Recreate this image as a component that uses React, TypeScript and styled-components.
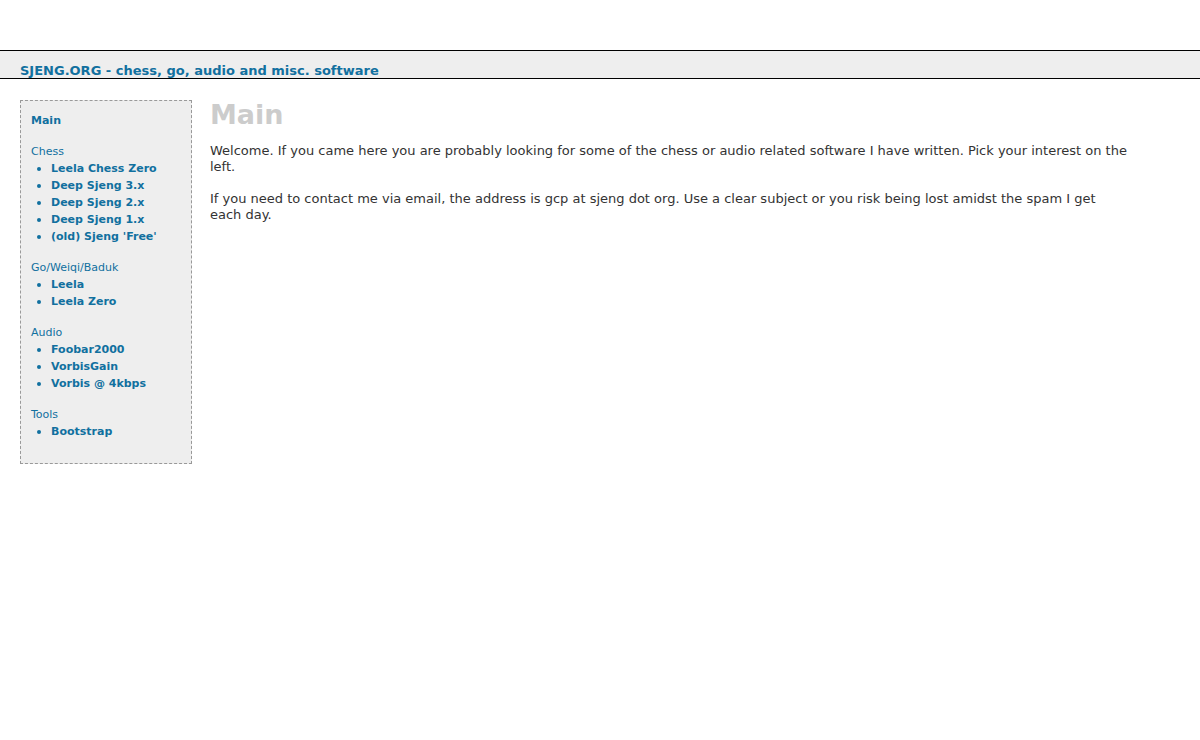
import { createGlobalStyle } from 'styled-components';
import styled from 'styled-components';

const GlobalStyle = createGlobalStyle`
	html, body {
		margin: 0;
		padding: 0;
		background: #fff;
	}
	body {
		font-family: Verdana, 'DejaVu Sans', sans-serif;
		font-size: 13px;
		color: #333;
	}
`;

const LINK = '#11709f';

const Header = styled.div`
	margin-top: 50px;
	border-top: 1px solid #000;
	border-bottom: 1px solid #000;
	background: #eee;
	height: 29px;
	padding-left: 20px;
	display: flex;
	align-items: flex-end;
	box-sizing: border-box;

	a {
		color: ${LINK};
		font-weight: bold;
		font-size: 13px;
		text-decoration: none;
		line-height: 16px;
		margin-bottom: -1px;
	}
`;

const Layout = styled.div`
	display: flex;
	align-items: flex-start;
	padding: 21px 60px 0 20px;
	gap: 18px;
`;

const Sidebar = styled.div`
	width: 172px;
	flex-shrink: 0;
	box-sizing: border-box;
	border: 1px dashed #999;
	background: #eee;
	padding: 11px 10px 23px 10px;
	font-size: 11px;
	line-height: 17px;
`;

const NavLink = styled.a`
	color: ${LINK};
	font-weight: bold;
	text-decoration: none;
	display: block;
`;

const Group = styled.div`
	margin-top: 14px;
`;

const GroupTitle = styled.div`
	color: ${LINK};
`;

const List = styled.ul`
	margin: 0;
	padding: 0;
	list-style: none;
`;

const Item = styled.li`
	display: flex;
	align-items: center;
	line-height: 17px;

	&::before {
		content: '';
		width: 4px;
		height: 4px;
		border-radius: 50%;
		background: ${LINK};
		margin: 1px 10px 0 6px;
		flex-shrink: 0;
	}
`;

const Content = styled.div`
	flex: 1;
	max-width: 918px;

	h1 {
		margin: 0;
		color: #ccc;
		font-size: 27px;
		line-height: 28px;
		font-weight: bold;
		padding-top: 1px;
	}

	p {
		margin: 16px 0 0 0;
		line-height: 16px;
	}
	h1 + p {
		margin-top: 14px;
	}
`;

const groups = [
	{
		title: 'Chess',
		items: ['Leela Chess Zero', 'Deep Sjeng 3.x', 'Deep Sjeng 2.x', 'Deep Sjeng 1.x', "(old) Sjeng 'Free'"],
	},
	{ title: 'Go/Weiqi/Baduk', items: ['Leela', 'Leela Zero'] },
	{ title: 'Audio', items: ['Foobar2000', 'VorbisGain', 'Vorbis @ 4kbps'] },
	{ title: 'Tools', items: ['Bootstrap'] },
];

export default function App(): JSX.Element {
	return (
		<>
			<GlobalStyle />
			<Header>
				<a href="#">SJENG.ORG - chess, go, audio and misc. software</a>
			</Header>
			<Layout>
				<Sidebar>
					<NavLink href="#">Main</NavLink>
					{groups.map(g => (
						<Group key={g.title}>
							<GroupTitle>{g.title}</GroupTitle>
							<List>
								{g.items.map(i => (
									<Item key={i}>
										<NavLink href="#">{i}</NavLink>
									</Item>
								))}
							</List>
						</Group>
					))}
				</Sidebar>
				<Content>
					<h1>Main</h1>
					<p>
						Welcome. If you came here you are probably looking for some of the chess or audio
						related software I have written. Pick your interest on the left.
					</p>
					<p>
						If you need to contact me via email, the address is gcp at sjeng dot org. Use a clear
						subject or you risk being lost amidst the spam I get each day.
					</p>
				</Content>
			</Layout>
		</>
	);
}
